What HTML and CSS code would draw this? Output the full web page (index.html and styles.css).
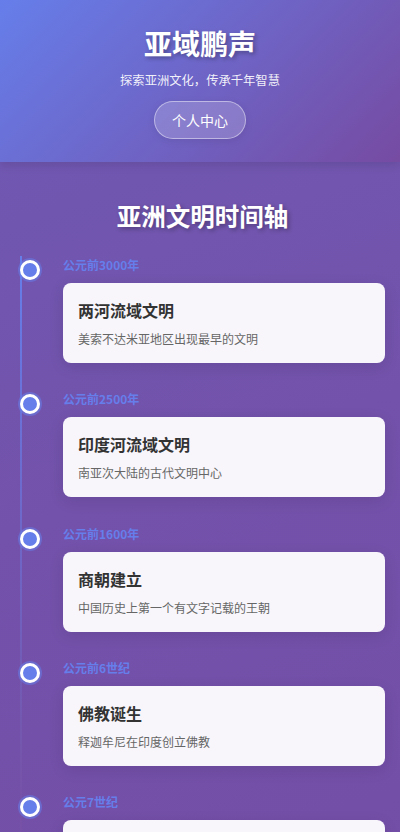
FILE: index.html
```html
<!DOCTYPE html>
<html lang="zh-CN">
<head>
<meta charset="utf-8">
<meta name="viewport" content="width=device-width, initial-scale=1">
<title>亚域鹏声</title>
<link rel="stylesheet" href="styles.css">
</head>
<body>
<header class="header">
  <h1 class="site-title">亚域鹏声</h1>
  <p class="site-sub">探索亚洲文化，传承千年智慧</p>
  <button class="user-btn" type="button">个人中心</button>
</header>
<main class="main">
  <h2 class="section-title">亚洲文明时间轴</h2>
  <div class="timeline">
    <div class="item">
      <span class="dot"></span>
      <div class="date">公元前3000年</div>
      <div class="card">
        <h3 class="card-title">两河流域文明</h3>
        <p class="card-desc">美索不达米亚地区出现最早的文明</p>
      </div>
    </div>
    <div class="item">
      <span class="dot"></span>
      <div class="date">公元前2500年</div>
      <div class="card">
        <h3 class="card-title">印度河流域文明</h3>
        <p class="card-desc">南亚次大陆的古代文明中心</p>
      </div>
    </div>
    <div class="item">
      <span class="dot"></span>
      <div class="date">公元前1600年</div>
      <div class="card">
        <h3 class="card-title">商朝建立</h3>
        <p class="card-desc">中国历史上第一个有文字记载的王朝</p>
      </div>
    </div>
    <div class="item">
      <span class="dot"></span>
      <div class="date">公元前6世纪</div>
      <div class="card">
        <h3 class="card-title">佛教诞生</h3>
        <p class="card-desc">释迦牟尼在印度创立佛教</p>
      </div>
    </div>
    <div class="item">
      <span class="dot"></span>
      <div class="date">公元7世纪</div>
      <div class="card">
        <h3 class="card-title">伊斯兰教兴起</h3>
        <p class="card-desc">穆罕默德在阿拉伯半岛创立伊斯兰教</p>
      </div>
    </div>
  </div>
</main>
</body>
</html>
```

FILE: styles.css
```css
* { box-sizing: border-box; }

html, body {
  margin: 0;
  padding: 0;
}

body {
  font-family: "Noto Sans CJK SC", "Noto Sans", sans-serif;
  background: linear-gradient(160deg, #6f59b3 0%, #7352ab 50%, #744ea6 100%);
  min-height: 100vh;
  color: #333;
}

.header {
  background: linear-gradient(135deg, #667eea 0%, #764ba2 100%);
  height: 162px;
  padding-top: 22px;
  display: flex;
  flex-direction: column;
  align-items: center;
  box-shadow: 0 2px 10px rgba(0, 0, 0, 0.12);
  position: relative;
  z-index: 1;
}

.site-title {
  margin: 0;
  font-size: 28px;
  line-height: 42px;
  font-weight: 700;
  color: #fff;
  text-shadow: 2px 2px 4px rgba(0, 0, 0, 0.3);
}

.site-sub {
  margin: 7px 0 0;
  font-size: 12.3px;
  line-height: 18px;
  color: rgba(255, 255, 255, 0.92);
}

.user-btn {
  margin-top: 12px;
  width: 92px;
  height: 38px;
  border-radius: 19px;
  border: 1px solid rgba(255, 255, 255, 0.45);
  background: rgba(255, 255, 255, 0.18);
  color: #fff;
  font-family: inherit;
  font-size: 14px;
  padding: 0;
  box-shadow: 0 2px 8px rgba(0, 0, 0, 0.08);
}

.main {
  padding: 36px 15px 0 20px;
}

.section-title {
  margin: 0 0 22px;
  text-align: center;
  font-size: 24.5px;
  line-height: 36px;
  font-weight: 700;
  color: #fff;
  text-shadow: 2px 2px 4px rgba(0, 0, 0, 0.3);
}

.timeline {
  position: relative;
  padding-left: 43px;
}

.timeline::before {
  content: "";
  position: absolute;
  left: 0;
  top: 0;
  bottom: 0;
  width: 2px;
  background: linear-gradient(to bottom, #667eea 0%, #7653a8 80%, #764ba2 100%);
}

.item {
  position: relative;
  padding-bottom: 27.25px;
}

.dot {
  position: absolute;
  left: -43px;
  top: 4px;
  width: 20px;
  height: 20px;
  border-radius: 50%;
  background: #667eea;
  border: 3px solid #fff;
  box-shadow: 0 0 0 2px rgba(102, 126, 234, 0.55);
}

.date {
  font-size: 12px;
  line-height: 18px;
  font-weight: 700;
  color: #667eea;
  margin-bottom: 9px;
}

.card {
  background: rgba(255, 255, 255, 0.95);
  border-radius: 8px;
  padding: 15px;
  box-shadow: 0 4px 15px rgba(0, 0, 0, 0.1);
}

.card-title {
  margin: 0;
  font-size: 16px;
  line-height: 24px;
  font-weight: 700;
  color: #333;
}

.card-desc {
  margin: 8px 0 0;
  font-size: 12px;
  line-height: 18px;
  color: #666;
}
```
